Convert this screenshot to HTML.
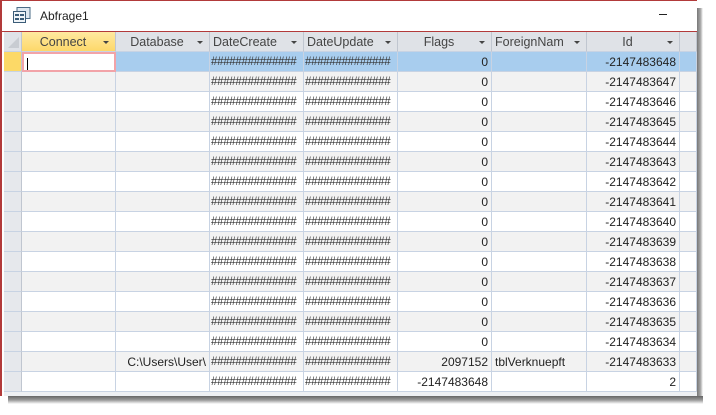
<!DOCTYPE html>
<html><head><meta charset="utf-8"><style>
*{margin:0;padding:0;box-sizing:border-box}
body{width:716px;height:415px;background:#fff;position:relative;overflow:hidden;font-family:"Liberation Sans",sans-serif}
.win{position:absolute;left:0;top:0;width:697px;height:396px;background:#fff;border-left:2px solid #b23a3a;border-top:1px solid #b23a3a}
.shadowR{position:absolute;left:697px;top:8px;width:6px;height:392px;background:linear-gradient(90deg,#777,#aaa 60%,#fff)}
.shadowB{position:absolute;left:8px;top:396px;width:695px;height:8px;background:linear-gradient(180deg,#666,#999 50%,#fff)}
.title{position:absolute;left:40px;top:9px;font-size:12px;color:#222}
.min{position:absolute;left:659px;top:14px;width:8px;height:1px;background:#222}
.redline{position:absolute;left:2px;top:31px;width:695px;height:1px;background:#b23a3a}
.c{position:absolute;height:20px;font-size:12px;line-height:20px;color:#222;white-space:nowrap;overflow:hidden;border-right:1px solid #c8d3e3;border-bottom:1px solid #c8d3e3;padding:0 3px}
.h{background:#dfe2e7;color:#444;font-size:12.5px;border-right:1px solid #c0c6d0}
.h .ar{position:absolute;right:6px;top:9px;width:0;height:0;border-left:3px solid transparent;border-right:3px solid transparent;border-top:3px solid #444}
.r{text-align:right}
.hash{font-size:11.5px;letter-spacing:-0.3px;color:#333}
</style></head><body>
<div class="shadowR"></div><div class="shadowB"></div>
<div class="win"></div>
<svg style="position:absolute;left:13px;top:7px" width="18" height="16" viewBox="0 0 18 16"><rect x="4" y="0.5" width="13" height="11" fill="#dfe8f0" stroke="#4a6b86"/><rect x="0.5" y="4.5" width="12" height="11" fill="#eef3f7" stroke="#3b5c78"/><rect x="2" y="7" width="4" height="2" fill="#3b5c78"/><rect x="7" y="7" width="4" height="2" fill="#3b5c78"/><rect x="2" y="11" width="4" height="2" fill="#3b5c78"/><rect x="7" y="11" width="4" height="2" fill="#3b5c78"/></svg>
<div class="title">Abfrage1</div>
<div class="min"></div>
<div class="redline"></div>
<div id="g"></div>
<script>
var cols=[[4,22],[22,116],[116,210],[210,304],[304,398],[398,492],[492,587],[587,680],[680,697]];
var heads=["","Connect","Database","DateCreate","DateUpdate","Flags","ForeignNam","Id",""];
var H='';
var hs="##############";
for(var i=0;i<cols.length;i++){
 var x=cols[i][0],w=cols[i][1]-x;
 var bg=i==1?'background:linear-gradient(#ffe9a0,#fdd86a);':'';
 var ta=(i==1||i==2||i==5||i==7)?'text-align:center;padding-right:14px;':'';
 var arrow=(i>0&&i<8)?'<span class="ar"></span>':'';
 if(i==0)H+='<div class="c h" style="left:'+x+'px;top:32px;width:'+w+'px;"><svg width="12" height="12" style="position:absolute;left:4px;top:5px"><path d="M11 0L11 11L0 11Z" fill="#c8ccd2"/></svg></div>';
 else H+='<div class="c h" style="left:'+x+'px;top:32px;width:'+w+'px;'+bg+ta+'">'+heads[i]+arrow+'</div>';
}
for(var r=0;r<17;r++){
 var y=52+r*20;
 var bg=r==0?'#a8cdee':(r%2==1?'#f2f2f2':'#fff');
 var data=["","","","hs","hs","0","",String(-2147483648+r),""];
 if(r==15){data[2]="C:\\Users\\User\\";data[5]="2097152";data[6]="tblVerknuepft";}
 if(r==16){data[5]="-2147483648";data[7]="2";}
 for(var i=0;i<cols.length;i++){
  var x=cols[i][0],w=cols[i][1]-x;
  var b=bg;
  if(i==0)b=r==0?'#fcd967':'#e6e8ec';
  if(i==1&&r==0)b='#fff';
  var st='left:'+x+'px;top:'+y+'px;width:'+w+'px;background:'+b+';';
  var txt=data[i],cls='c';
  if(txt=="hs"){txt=hs;cls+=' hash';st+='padding:0 1px;'}
  if(i==5||i==7)cls+=' r';
  if(i==2&&r==15)cls+=' r';
  if(i==0)st+='border-right:1px solid #c0c6d0;';
  if(i==1&&r==0){st+='border:2px solid #f2a3a8;';txt='<span style="display:inline-block;width:1px;height:14px;background:#000;vertical-align:middle"></span>';}
  H+='<div class="'+cls+'" style="'+st+'">'+txt+'</div>';
 }
}
H+='<div style="position:absolute;left:4px;top:392px;width:693px;height:4px;background:#eef0f3"></div>';
document.getElementById('g').innerHTML=H;
</script>
</body></html>
